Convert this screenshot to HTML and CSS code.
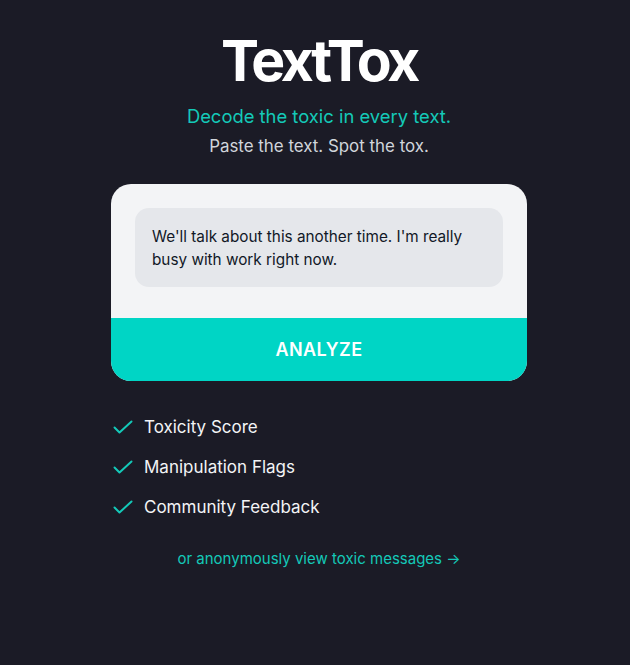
FILE: index.html
```html
<!DOCTYPE html>
<html lang="en">
<head>
    <meta charset="UTF-8" />
    <meta name="viewport" content="width=device-width, initial-scale=1.0"/>
    <title>TextTox</title>
    <link rel="stylesheet" href="styles.css">
</head>
<body>
<div class="page">
    <h1 class="logo">TextTox</h1>
    <p class="tagline">Decode the toxic in every text.</p>
    <p class="subline">Paste the text. Spot the tox.</p>

    <div class="card">
        <div class="message">We'll talk about this another time. I'm really busy with work right now.</div>
        <button class="analyze">ANALYZE</button>
    </div>

    <ul class="features">
        <li>
            <svg class="check" viewBox="0 0 20 14" width="20" height="14"><path d="M1.5 7.5l5 5L18.5 1.5" fill="none" stroke="#14c9b8" stroke-width="2" stroke-linecap="round" stroke-linejoin="round"/></svg>
            Toxicity Score
        </li>
        <li>
            <svg class="check" viewBox="0 0 20 14" width="20" height="14"><path d="M1.5 7.5l5 5L18.5 1.5" fill="none" stroke="#14c9b8" stroke-width="2" stroke-linecap="round" stroke-linejoin="round"/></svg>
            Manipulation Flags
        </li>
        <li>
            <svg class="check" viewBox="0 0 20 14" width="20" height="14"><path d="M1.5 7.5l5 5L18.5 1.5" fill="none" stroke="#14c9b8" stroke-width="2" stroke-linecap="round" stroke-linejoin="round"/></svg>
            Community Feedback
        </li>
    </ul>

    <a class="browse" href="#">or anonymously view toxic messages &rarr;</a>
</div>
</body>
</html>
```

FILE: styles.css
```css
body {
  margin: 0;
  padding-left: 8px;
  min-height: 100vh;
  background-color: #1b1b26;
  font-family: Inter, "Noto Sans", sans-serif;
  color: #fff;
}

.page {
  width: 416px;
  margin: 0 auto;
  padding-top: 30px;
  display: flex;
  flex-direction: column;
  align-items: center;
}

.logo {
  margin: 0;
  font-size: 57px;
  font-weight: 700;
  letter-spacing: -0.06em;
  line-height: 62px;
}

.tagline {
  margin: 12px 0 0;
  font-size: 18.4px;
  line-height: 24px;
  color: #14c9b8;
}

.subline {
  margin: 6px 0 0;
  font-size: 16.9px;
  line-height: 24px;
  color: #d1d5db;
}

.card {
  align-self: stretch;
  margin-top: 26px;
  background-color: #f3f4f6;
  border-radius: 20px;
  overflow: hidden;
}

.message {
  margin: 24px 24px 31px;
  padding: 17px 17px 16px;
  background-color: #e5e7eb;
  border-radius: 14px;
  font-size: 15.3px;
  line-height: 23px;
  color: #111827;
}

.analyze {
  display: block;
  width: 100%;
  height: 63px;
  border: none;
  background-color: #00d5c5;
  color: #fff;
  font-family: inherit;
  font-size: 18px;
  font-weight: 600;
  letter-spacing: 0.02em;
  cursor: pointer;
}

.features {
  align-self: stretch;
  list-style: none;
  margin: 34px 0 0;
  padding: 0 0 0 2px;
  display: flex;
  flex-direction: column;
  gap: 16px;
}

.features li {
  display: flex;
  align-items: center;
  gap: 11px;
  font-size: 17px;
  line-height: 24px;
  color: #f3f4f6;
}

.check {
  flex: none;
}

.browse {
  margin-top: 29px;
  font-size: 15px;
  line-height: 22px;
  color: #14c9b8;
  text-decoration: none;
}
```
